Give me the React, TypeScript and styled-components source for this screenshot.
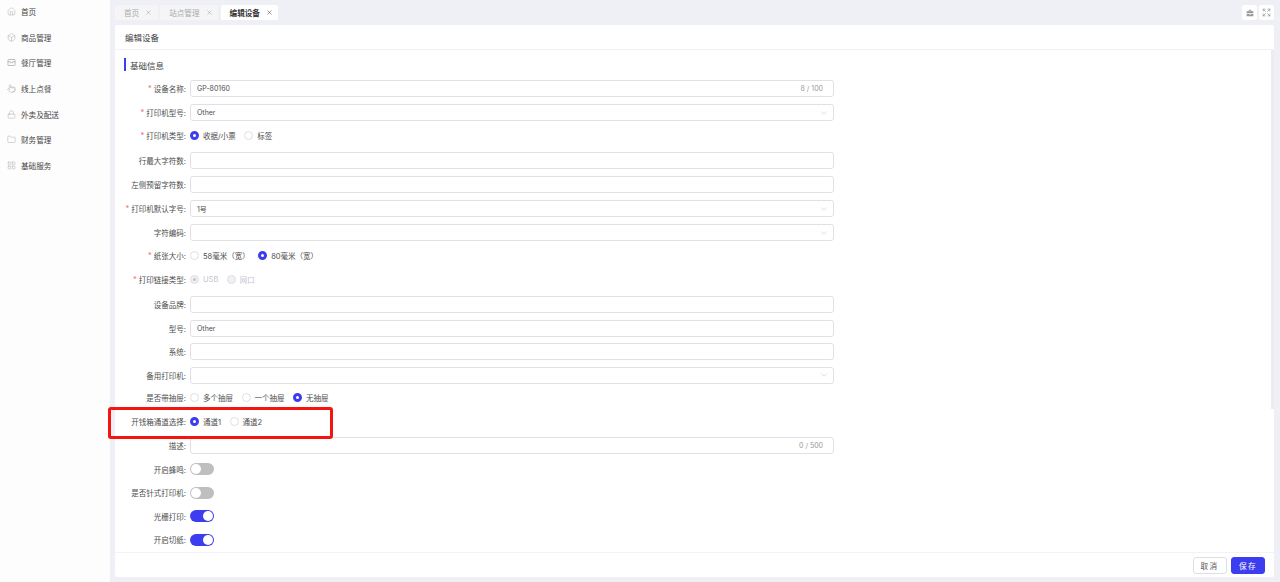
import React from 'react';
import styled, { createGlobalStyle } from 'styled-components';
import { X, ChevronDown, Home, Box, Pointer, Lock, Folder, LayoutGrid, Expand } from 'lucide-react';

const Global = createGlobalStyle`
  html, body {
    margin: 0;
    height: 100%;
    overflow: hidden;
    background: #eff0f5;
    font-family: Inter, "Noto Sans CJK SC", sans-serif;
  }
  * { box-sizing: border-box; }
`;

const Page = styled.div`
  position: relative;
  display: flex;
  width: 1280px;
  height: 582px;
`;

const Sidebar = styled.nav`
  width: 110px;
  flex: none;
  background: #fdfdfe;
`;

const MenuList = styled.div`
  margin-top: -1px;
`;

const MenuItem = styled.div`
  display: flex;
  align-items: center;
  height: 25.6px;
  padding-left: 7px;
  gap: 5px;
  color: #444;
  font-size: 7.6px;
  svg { color: #aaa; flex: none; }
`;

const Main = styled.div`
  flex: 1;
  display: flex;
  flex-direction: column;
  padding: 5px 6px 5px 5px;
  min-width: 0;
`;

const TabBar = styled.div`
  display: flex;
  align-items: flex-start;
  gap: 2.5px;
  height: 20px;
`;

const Tab = styled.div<{ $active?: boolean }>`
  display: flex;
  align-items: center;
  justify-content: space-between;
  height: 15px;
  padding: 0 5.5px 0 9px;
  gap: 6px;
  border-radius: 2px;
  background: ${p => (p.$active ? '#fff' : '#f5f5f8')};
  color: ${p => (p.$active ? '#333' : '#aaa')};
  font-size: 7.6px;
  font-weight: ${p => (p.$active ? 600 : 400)};
`;

const TabTools = styled.div`
  margin-left: auto;
  display: flex;
  gap: 2px;
`;

const ToolButton = styled.div`
  width: 15px;
  height: 15px;
  display: flex;
  align-items: center;
  justify-content: center;
  background: #fff;
  border-radius: 2px;
  color: #999;
`;

const Card = styled.div`
  flex: 1;
  min-height: 0;
  display: flex;
  flex-direction: column;
  background: #fff;
  border-radius: 2px;
`;

const CardHeader = styled.div`
  height: 25px;
  flex: none;
  display: flex;
  align-items: center;
  padding-left: 10px;
  font-size: 8.5px;
  color: #444;
  border-bottom: 1px solid #f2f3f6;
`;

const ScrollArea = styled.div`
  flex: 1;
  min-height: 0;
  display: flex;
  overflow: hidden;
`;

const FormBody = styled.div`
  flex: 1;
  padding: 0 0 0 9px;
`;

const ScrollTrack = styled.div`
  width: 3px;
  flex: none;
`;

const ScrollThumb = styled.div`
  height: 359px;
  background: #ececee;
`;

const SectionTitle = styled.div`
  display: flex;
  align-items: center;
  height: 13px;
  margin-top: 8px;
  margin-bottom: 9px;
  padding-left: 4px;
  border-left: 2px solid #3d3df0;
  font-size: 8.5px;
  color: #444;
`;

const Row = styled.div<{ $tight?: boolean; $radio?: boolean }>`
  display: flex;
  align-items: center;
  height: 17px;
  padding-bottom: ${p => (p.$radio ? '2px' : '0')};
  margin-bottom: ${p => (p.$tight ? '6.5px' : '7px')};
`;

const Label = styled.div`
  width: 66px;
  flex: none;
  font-size: 7.5px;
  color: #4d4d4d;
  white-space: nowrap;
  padding-right: 4px;
  display: flex;
  justify-content: flex-end;
  align-items: center;
`;

const Star = styled.span`
  color: #f56c6c;
  margin-right: 2px;
`;

const Field = styled.div`
  width: 644px;
  height: 17px;
  flex: none;
  display: flex;
  align-items: center;
  justify-content: space-between;
  padding: 0 10px 0 6px;
  border: 1px solid #dfe1e7;
  border-radius: 3px;
  font-size: 7px;
  color: #4d4d4d;
`;

const Counter = styled.span`
  color: #999;
`;

const ArrowWrap = styled.span`
  display: flex;
  margin-right: -6px;
`;

const RadioGroup = styled.div`
  display: flex;
  align-items: center;
  gap: 8.5px;
`;

const RadioItem = styled.div<{ $disabled?: boolean }>`
  display: flex;
  align-items: center;
  gap: 4px;
  font-size: 7.5px;
  color: ${p => (p.$disabled ? '#c0c4cc' : '#4d4d4d')};
`;

const RadioDot = styled.span<{ $on?: boolean; $disabled?: boolean }>`
  width: 9px;
  height: 9px;
  border-radius: 50%;
  flex: none;
  border: ${p => (p.$on && !p.$disabled ? '3px solid #3d3df0' : '1px solid #dcdfe6')};
  background: ${p => (p.$disabled ? '#f0f0f2' : '#fff')};
  display: flex;
  align-items: center;
  justify-content: center;
  &::after {
    content: '';
    display: ${p => (p.$on && p.$disabled ? 'block' : 'none')};
    width: 3px;
    height: 3px;
    border-radius: 50%;
    background: #c0c4cc;
  }
`;

const Switch = styled.div<{ $on?: boolean }>`
  width: 24px;
  height: 12px;
  border-radius: 6px;
  padding: 1px;
  display: flex;
  justify-content: ${p => (p.$on ? 'flex-end' : 'flex-start')};
  background: ${p => (p.$on ? '#3d3df0' : '#bfbfbf')};
  &::after {
    content: '';
    width: 10px;
    height: 10px;
    border-radius: 50%;
    background: #fff;
  }
`;

const CardFooter = styled.div`
  height: 25px;
  flex: none;
  display: flex;
  align-items: center;
  justify-content: flex-end;
  gap: 4.5px;
  padding: 0 9px 0 0;
  border-top: 1px solid #f2f3f6;
`;

const Button = styled.button<{ $primary?: boolean }>`
  width: 34px;
  height: 17px;
  padding: 0;
  font-family: inherit;
  font-size: 7.6px;
  letter-spacing: 1.5px;
  border-radius: 3px;
  border: 1px solid ${p => (p.$primary ? '#3d3df0' : '#dcdfe6')};
  background: ${p => (p.$primary ? '#3d3df0' : '#fff')};
  color: ${p => (p.$primary ? '#fff' : '#555')};
`;

const Annotation = styled.div`
  position: absolute;
  left: 108px;
  top: 407px;
  width: 225px;
  height: 32px;
  border: 3px solid #f5140f;
  border-radius: 3px;
`;

const TrayIcon = () => (
  <svg width="9" height="9" viewBox="0 0 24 24" fill="none" stroke="#aaa" strokeWidth="2">
    <rect x="2.5" y="4" width="19" height="16" rx="1.5" />
    <path d="M2.5 10h6.5v2.5h6V10h6.5" />
  </svg>
);

const CaseIcon = () => (
  <svg width="8" height="8" viewBox="0 0 24 24" fill="#999">
    <path d="M8 7V3.5A1.5 1.5 0 0 1 9.5 2h5A1.5 1.5 0 0 1 16 3.5V7h6v6H2V7zm2.5 0h3V4.500h-3z" />
    <path d="M2 15h8v2h4v-2h8v7H2z" />
  </svg>
);

const menu = [
  { label: '首页', icon: <Home size={9} strokeWidth={1.3} /> },
  { label: '商品管理', icon: <Box size={9} strokeWidth={1.3} /> },
  { label: '餐厅管理', icon: <TrayIcon /> },
  { label: '线上点餐', icon: <Pointer size={9} strokeWidth={1.3} /> },
  { label: '外卖及配送', icon: <Lock size={9} strokeWidth={1.3} /> },
  { label: '财务管理', icon: <Folder size={9} strokeWidth={1.3} /> },
  { label: '基础服务', icon: <LayoutGrid size={9} strokeWidth={1.3} /> },
];

const Req = ({ children }: { children: React.ReactNode }) => (
  <Label><Star>*</Star>{children}:</Label>
);

const Radios = ({ items, on, disabled }: { items: string[]; on: number; disabled?: boolean }) => (
  <RadioGroup>
    {items.map((t, i) => (
      <RadioItem key={t} $disabled={disabled}>
        <RadioDot $on={i === on} $disabled={disabled} />
        {t}
      </RadioItem>
    ))}
  </RadioGroup>
);

const Chevron = () => (
  <ArrowWrap><ChevronDown size={10} color="#c0c4cc" strokeWidth={1.5} /></ArrowWrap>
);

export default function App() {
  return (
    <Page>
      <Global />
      <Sidebar>
        <MenuList>
          {menu.map(({ label, icon }) => (
            <MenuItem key={label}>
              {icon}
              {label}
            </MenuItem>
          ))}
        </MenuList>
      </Sidebar>
      <Main>
        <TabBar>
          <Tab>首页 <X size={7} color="#aaa" /></Tab>
          <Tab>站点管理 <X size={7} color="#aaa" /></Tab>
          <Tab $active>编辑设备 <X size={7} color="#555" /></Tab>
          <TabTools>
            <ToolButton><CaseIcon /></ToolButton>
            <ToolButton><Expand size={9} /></ToolButton>
          </TabTools>
        </TabBar>
        <Card>
          <CardHeader>编辑设备</CardHeader>
          <ScrollArea>
            <FormBody>
              <SectionTitle>基础信息</SectionTitle>
              <Row><Req>设备名称</Req><Field>GP-80160<Counter>8 / 100</Counter></Field></Row>
              <Row><Req>打印机型号</Req><Field>Other<Chevron /></Field></Row>
              <Row $radio><Req>打印机类型</Req><Radios items={['收据/小票', '标签']} on={0} /></Row>
              <Row><Label>行最大字符数:</Label><Field /></Row>
              <Row><Label>左侧预留字符数:</Label><Field /></Row>
              <Row><Req>打印机默认字号</Req><Field>1号<Chevron /></Field></Row>
              <Row><Label>字符编码:</Label><Field><span /><Chevron /></Field></Row>
              <Row $radio><Req>纸张大小</Req><Radios items={['58毫米（宽）', '80毫米（宽）']} on={1} /></Row>
              <Row $radio><Req>打印链接类型</Req><Radios items={['USB', '网口']} on={0} disabled /></Row>
              <Row $tight><Label>设备品牌:</Label><Field /></Row>
              <Row $tight><Label>型号:</Label><Field>Other</Field></Row>
              <Row $tight><Label>系统:</Label><Field /></Row>
              <Row $tight><Label>备用打印机:</Label><Field><span /><Chevron /></Field></Row>
              <Row $tight $radio><Label>是否带抽屉:</Label><Radios items={['多个抽屉', '一个抽屉', '无抽屉']} on={2} /></Row>
              <Row $tight $radio><Label>开钱箱通道选择:</Label><Radios items={['通道1', '通道2']} on={0} /></Row>
              <Row $tight><Label>描述:</Label><Field><span /><Counter>0 / 500</Counter></Field></Row>
              <Row $tight><Label>开启蜂鸣:</Label><Switch /></Row>
              <Row $tight><Label>是否针式打印机:</Label><Switch /></Row>
              <Row $tight><Label>光栅打印:</Label><Switch $on /></Row>
              <Row $tight><Label>开启切纸:</Label><Switch $on /></Row>
            </FormBody>
            <ScrollTrack><ScrollThumb /></ScrollTrack>
          </ScrollArea>
          <CardFooter>
            <Button>取消</Button>
            <Button $primary>保存</Button>
          </CardFooter>
        </Card>
      </Main>
      <Annotation />
    </Page>
  );
}
